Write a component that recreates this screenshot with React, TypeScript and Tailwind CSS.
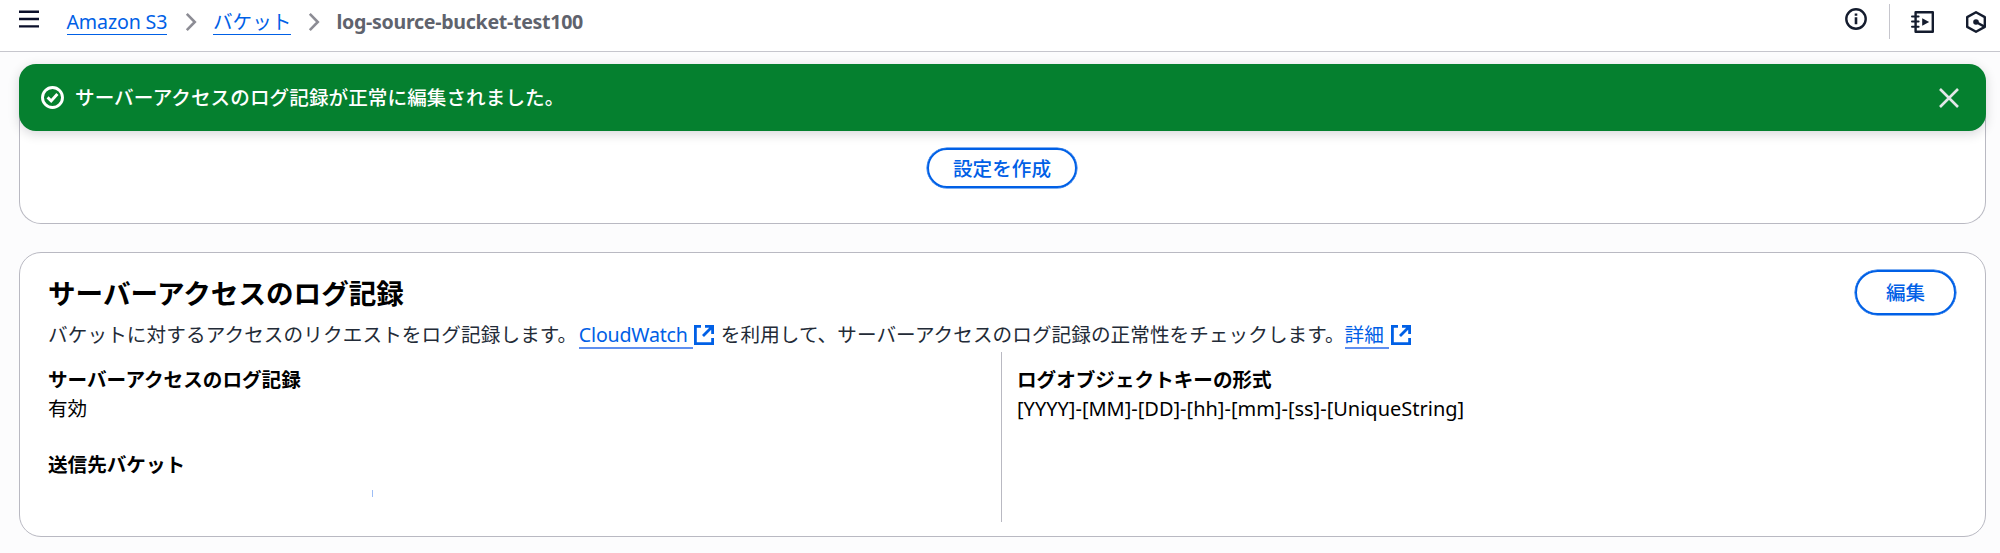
import React from 'react';

interface LinkProps {
  children: React.ReactNode;
  className?: string;
}

const TextLink: React.FC<LinkProps> = ({ children, className = '' }) => (
  <a href="#" className={`whitespace-nowrap text-[#0060e6] ${className}`}>{children}</a>
);

const MenuIcon = () => (
  <svg className="w-5 h-5" viewBox="0 0 20 20" fill="none" stroke="#0a0f2a" strokeWidth="2.4">
    <path d="M0 2.7h20M0 10h20M0 17.4h20" />
  </svg>
);

const ChevronIcon = () => (
  <svg className="w-3 h-5" viewBox="0 0 12 20" fill="none" stroke="#8c8c94" strokeWidth="2.6">
    <path d="M1.8 1.8l8 8.2-8 8.2" />
  </svg>
);

const InfoIcon = () => (
  <svg className="w-[22px] h-[22px]" viewBox="0 0 22 22" fill="none" stroke="#141c2e" strokeWidth="2.4">
    <circle cx="11" cy="11" r="9.7" />
    <path d="M11 9.2v7M11 5.4v2.4" strokeWidth="2.6" />
  </svg>
);

const NotebookIcon = () => (
  <svg className="w-[23px] h-[22px]" viewBox="0 0 23 22" fill="none" stroke="#141c2e" strokeWidth="2.4" strokeLinejoin="round" strokeLinecap="round">
    <path d="M4.6 1.2h17.2v19.6H4.6z" />
    <path d="M1 5.4h6.6M1 10.6h6.6M1 15.8h6.6" strokeWidth="2" />
    <path d="M11.2 7.2l7 3.8-7 3.8z" fill="#141c2e" stroke="none" />
  </svg>
);

const HexagonIcon = () => (
  <svg className="w-5 h-[22px]" viewBox="0 0 20 22" fill="none" stroke="#141c2e" strokeWidth="2.4" strokeLinejoin="round">
    <path d="M10 1.2l8.8 4.9v9.8L10 20.8l-8.8-4.9V6.1z" />
    <circle cx="10" cy="11" r="2.8" fill="#141c2e" stroke="none" />
    <path d="M10 11l8.4 4.6" />
  </svg>
);

const CheckIcon = () => (
  <svg className="w-[23px] h-[23px]" viewBox="0 0 23 23" fill="none" stroke="#fff" strokeWidth="2.9">
    <circle cx="11.5" cy="11.5" r="10" />
    <path d="M6.6 11.4l3.6 3.6 6.2-7" />
  </svg>
);

const CloseIcon = () => (
  <svg className="w-5 h-5" viewBox="0 0 20 20" fill="none" stroke="#e4e6e8" strokeWidth="2.6">
    <path d="M1 1l18 18M19 1L1 19" />
  </svg>
);

const ExternalIcon = () => (
  <svg className="w-5 h-5 shrink-0" viewBox="0 0 20 20" fill="none" stroke="#0060e6" strokeWidth="2.8">
    <path d="M7 1.4H1.4v17.2h17.2V13" />
    <path d="M11 1.4h7.6V9M18.2 1.8L9 11" />
  </svg>
);

export default function App() {
  return (
    <div className="flex h-[553px] w-[2000px] flex-col overflow-hidden bg-[#fcfcfd] font-['Noto_Sans','Noto_Sans_CJK_JP',sans-serif] text-[19.6px] leading-7 text-black">
      {/* Breadcrumbs */}
      <header className="flex h-[52px] shrink-0 items-start border-b border-[#c6c6cd] bg-white pl-[18.5px]">
        <div className="mt-[9px]"><MenuIcon /></div>
        <nav className="mt-[8px] ml-[28px] flex h-7 items-start">
          <TextLink className="h-[27px] w-[100.5px] border-b border-[#0060e6] tracking-[-0.15px]">Amazon S3</TextLink>
          <div className="mt-1 ml-[18px]"><ChevronIcon /></div>
          <TextLink className="ml-[16px] h-[27px] w-[78px] border-b border-[#0060e6]">バケット</TextLink>
          <div className="mt-1 ml-[17px]"><ChevronIcon /></div>
          <span className="ml-[16.5px] whitespace-nowrap font-bold tracking-[-0.3px] text-[#5f636d]">log-source-bucket-test100</span>
        </nav>
        <div className="ml-auto flex items-start pr-[14px]">
          <div className="mt-2"><InfoIcon /></div>
          <div className="mt-1 ml-[22px] h-[35px] w-[1.5px] bg-[#c6c6cd]" />
          <div className="mt-[11px] ml-[21px]"><NotebookIcon /></div>
          <div className="mt-[11px] ml-[32px]"><HexagonIcon /></div>
        </div>
      </header>

      <main className="flex flex-col pt-3 pr-[14px] pl-[19px]">
        {/* Flash message */}
        <div className="z-10 flex h-[67px] items-center rounded-[17px] bg-[#05802f] pr-[27px] pl-[21.5px] text-white shadow-[0_3px_12px_rgba(0,7,22,0.16)]">
          <CheckIcon />
          <p className="ml-[11.5px] font-medium tracking-[0.06px]">サーバーアクセスのログ記録が正常に編集されました。</p>
          <button className="ml-auto"><CloseIcon /></button>
        </div>

        <section className="-mt-5 flex h-[113px] justify-center rounded-b-[22px] border border-t-0 border-[#b9b9c2] bg-white pt-[37px] pr-px">
          <button className="h-10 w-[150px] rounded-full border-[2.6px] border-[#0060e6] pt-px font-medium leading-none text-[#0060e6] ring-[0.5px] ring-[#0060e6]">設定を作成</button>
        </section>

        {/* Server access logging */}
        <section className="mt-7 h-[285px] rounded-[22px] border border-[#b9b9c2] bg-white pr-[29px] pl-7">
          <div className="flex h-[68px] items-start pt-[17px]">
            <h2 className="mt-[5px] text-[27.6px] leading-9 font-bold">サーバーアクセスのログ記録</h2>
            <button className="ml-auto h-[45px] w-[101px] rounded-full border-[2.6px] border-[#0060e6] font-medium leading-none text-[#0060e6] ring-[0.5px] ring-[#0060e6]">編集</button>
          </div>
          <p className="flex h-7 items-start whitespace-nowrap text-[#232b37]">
            <span className="tracking-[0.12px]">バケットに対するアクセスのリクエストをログ記録します。</span>
            <TextLink className="ml-[1.5px] h-[28px] w-[114px] border-b-2 border-[#5e8ff0] tracking-[-0.2px]">CloudWatch</TextLink>
            <span className="mt-[4px] ml-[1.5px]"><ExternalIcon /></span>
            <span className="ml-[6.5px] tracking-[0.07px]">を利用して、サーバーアクセスのログ記録の正常性をチェックします。</span>
            <TextLink className="h-[28px] w-[44px] border-b-2 border-[#5e8ff0]">詳細</TextLink>
            <span className="mt-[4px] ml-[2px]"><ExternalIcon /></span>
          </p>
          <div className="mt-[3px] flex">
            <dl className="w-[953px] pt-[14px]">
              <dt className="font-bold">サーバーアクセスのログ記録</dt>
              <dd className="mt-px">有効</dd>
              <dt className="mt-7 font-bold">送信先バケット</dt>
              <dd className="pt-[11px] pl-[324px]"><div className="h-[7px] w-px bg-[#9dbdf5]" /></dd>
            </dl>
            <dl className="h-[170px] border-l-[1.5px] border-[#b9b9c2] pt-[14px] pl-[15px]">
              <dt className="font-bold">ログオブジェクトキーの形式</dt>
              <dd className="mt-px whitespace-nowrap text-[20px]">[YYYY]-[MM]-[DD]-[hh]-[mm]-[ss]-[UniqueString]</dd>
            </dl>
          </div>
        </section>
      </main>
    </div>
  );
}
